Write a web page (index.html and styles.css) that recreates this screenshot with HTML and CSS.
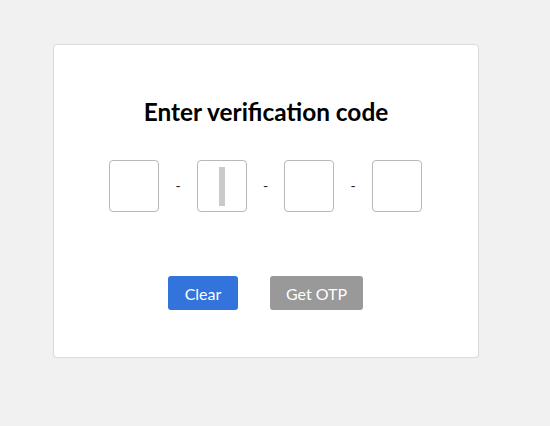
FILE: index.html
```html
<!DOCTYPE html>
<html>
<head>
<meta charset="utf-8">
<link rel="stylesheet" href="styles.css">
</head>
<body>
<div class="card">
  <h1 class="title">Enter verification code</h1>
  <div class="otp-row">
    <div class="otp-box"></div>
    <span class="dash">-</span>
    <div class="otp-box"><span class="caret"></span></div>
    <span class="dash dash-narrow">-</span>
    <div class="otp-box"></div>
    <span class="dash">-</span>
    <div class="otp-box"></div>
  </div>
  <div class="actions">
    <button class="btn btn-clear">Clear</button>
    <button class="btn btn-otp">Get OTP</button>
  </div>
</div>
</body>
</html>
```
FILE: styles.css
```css
html, body {
  margin: 0;
  padding: 0;
  background: #f1f1f1;
  font-family: Lato, "Open Sans", sans-serif;
}
body {
  padding: 44px 0 0 53px;
}
.card {
  box-sizing: border-box;
  width: 426px;
  height: 314px;
  background: #fff;
  border: 1px solid #dcdcdc;
  border-radius: 4px;
  box-shadow: 0 1px 2px rgba(0,0,0,0.06);
  display: flex;
  flex-direction: column;
  align-items: center;
}
.title {
  margin: 52px 0 0;
  font-size: 24.4px;
  font-weight: 700;
  color: #000;
  line-height: 30px;
}
.otp-row {
  margin-top: 33px;
  margin-right: 1px;
  display: flex;
  align-items: center;
  gap: 16px;
}
.otp-box {
  box-sizing: border-box;
  width: 50px;
  height: 52px;
  border: 1px solid #b8b8b8;
  border-radius: 4px;
  display: flex;
  align-items: center;
  justify-content: center;
}
.caret {
  display: block;
  width: 6px;
  height: 39px;
  background: #cacaca;
}
.dash {
  width: 6px;
  text-align: center;
  font-size: 14px;
  color: #222;
  line-height: 1;
}
.dash-narrow {
  width: 5px;
}
.actions {
  margin-top: 64px;
  margin-right: 1px;
  display: flex;
  gap: 32px;
}
.btn {
  height: 34px;
  border: none;
  border-radius: 3px;
  color: #fff;
  font-family: Lato, sans-serif;
  font-size: 16px;
  padding: 0;
}
.btn-clear {
  width: 70px;
  background: #3273dc;
}
.btn-otp {
  width: 93px;
  background: #999999;
}
```
